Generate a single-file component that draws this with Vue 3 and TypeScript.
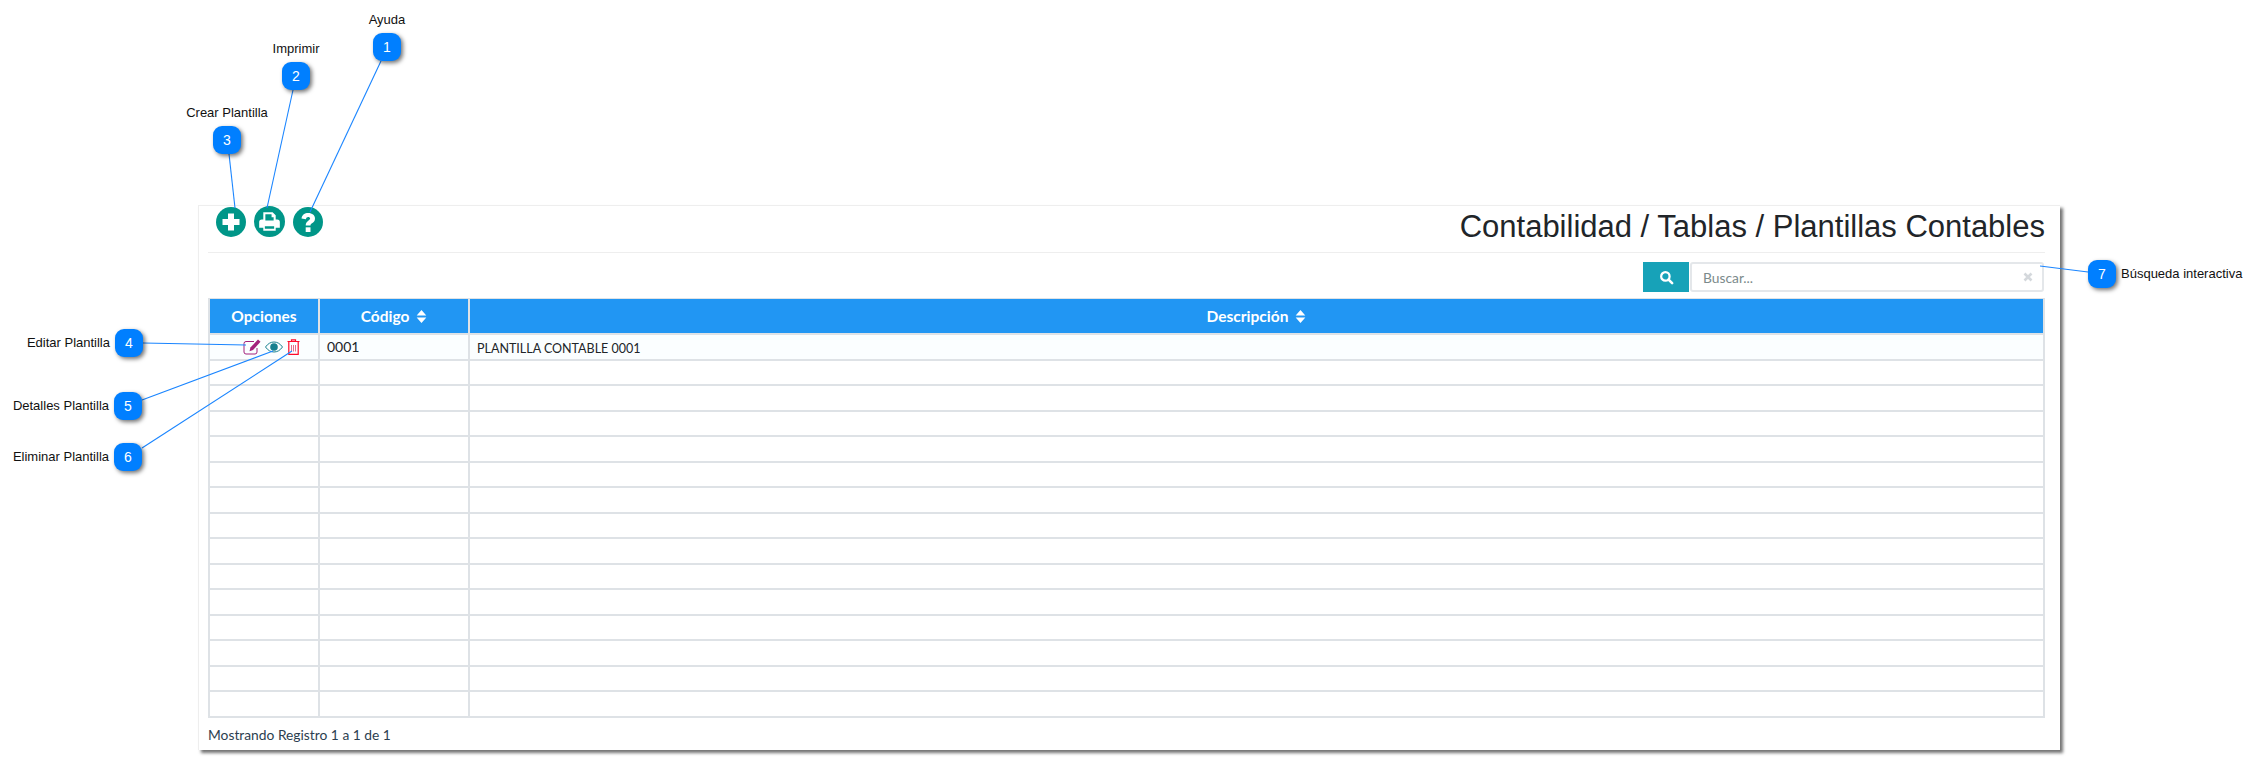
<template>
  <div class="page">
    <section class="card">
      <header class="top-bar">
        <div class="actions">
          <button class="round-btn" type="button" aria-label="Crear Plantilla">
            <svg viewBox="0 0 30 30" width="30" height="30"><path d="M12 6.500h6V12h5.500v6H18v5.500h-6V18H6.500v-6H12z" fill="#fff" /></svg>
          </button>
          <button class="round-btn wide" type="button" aria-label="Imprimir">
            <svg viewBox="0 0 30 30" width="31" height="31">
              <path d="M9 6h9l3 3v4h1.500A2.500 2.500 0 0 1 25 15.500V21h-4v3H9v-3H5v-5.500A2.500 2.500 0 0 1 7.500 13H9z" fill="#fff" />
              <path d="M11 8h6v3h2v3h-8zM10.500 19.500h9V22h-9z" fill="#009688" />
            </svg>
          </button>
          <button class="round-btn" type="button" aria-label="Ayuda">
            <svg viewBox="0 0 30 30" width="30" height="30">
              <path d="M8.500 11.500C9 7.800 11.700 6 15.300 6c3.800 0 6.700 2.300 6.700 5.500 0 2.500-1.400 3.700-3 4.800-1.100.8-1.500 1.200-1.500 2.200h-4.800c0-2.500.9-3.600 2.600-4.800 1.200-.8 1.800-1.300 1.800-2.100 0-.9-.8-1.500-1.900-1.500-1.200 0-2 .7-2.300 2.100z" fill="#fff" />
              <path d="M12.700 20.300h4.800V25h-4.800z" fill="#fff" />
            </svg>
          </button>
        </div>
        <h1 class="title">Contabilidad / Tablas / Plantillas Contables</h1>
      </header>

      <div class="search-row">
        <span class="search-addon">
          <svg viewBox="0 0 16 16" width="15" height="15"><circle cx="6.800" cy="6.800" r="4.500" fill="none" stroke="#fff" stroke-width="2.400" /><path d="M10.200 10.200l3.800 3.800" stroke="#fff" stroke-width="2.800" stroke-linecap="round" /></svg>
        </span>
        <div class="search-box">
          <span class="placeholder">Buscar...</span>
          <svg viewBox="0 0 10 10" width="10" height="10"><path d="M1.500 1.500l7 7M8.500 1.500l-7 7" stroke="#d4d8dc" stroke-width="2.600" /></svg>
        </div>
      </div>

      <div class="grid-table">
        <div class="th">Opciones</div>
        <div class="th">Código <svg class="sort" viewBox="0 0 10 14" width="11" height="15"><path d="M5 1l4.500 5H.5zM5 13L.5 8h9z" fill="#fff" /></svg></div>
        <div class="th">Descripción <svg class="sort" viewBox="0 0 10 14" width="11" height="15"><path d="M5 1l4.500 5H.5zM5 13L.5 8h9z" fill="#fff" /></svg></div>

        <div class="td first options">
          <svg viewBox="0 0 18 16" width="18" height="16">
            <path d="M11 2.500H3A2 2 0 0 0 1 4.500v8.500a2 2 0 0 0 2 2h9a2 2 0 0 0 2-2V9" fill="none" stroke="#a3217c" stroke-width="1" />
            <path d="M15 .5l2.500 2.300L10 11l-3.500 1.200.9-3.600z" fill="#a3217c" />
          </svg>
          <svg viewBox="0 0 18 12" width="18" height="12">
            <path d="M.5 6C3 2.500 5.800 1 9 1s6 1.500 8.500 5C15 9.500 12.200 11 9 11S3 9.500.5 6z" fill="none" stroke="#17808f" stroke-width="1" />
            <circle cx="9" cy="6" r="3.800" fill="#17808f" />
          </svg>
          <svg viewBox="0 0 13 16" width="13" height="16">
            <path d="M4.500 2V.8h4V2M.5 2.500h12" fill="none" stroke="#ff0a2a" stroke-width="1.200" />
            <path d="M1.800 3v12.300h9.400V3" fill="none" stroke="#ff0a2a" stroke-width="1.200" />
            <path d="M4.500 6v6.500M6.500 6v6.500M8.500 6v6.500" fill="none" stroke="#e0476a" stroke-width="0.800" />
          </svg>
        </div>
        <div class="td first code">0001</div>
        <div class="td first desc">PLANTILLA CONTABLE 0001</div>

        <template v-for="n in emptyRows" :key="n">
          <div class="td"></div>
          <div class="td"></div>
          <div class="td"></div>
        </template>
      </div>

      <footer class="table-info">Mostrando Registro 1 a 1 de 1</footer>
    </section>

    <svg class="leaders" width="2257" height="759">
      <line v-for="l in leaders" :key="l.join()" :x1="l[0]" :y1="l[1]" :x2="l[2]" :y2="l[3]" />
    </svg>

    <template v-for="c in callouts" :key="c.n">
      <span class="badge" :style="{ left: c.x + 'px', top: c.y + 'px' }">{{ c.n }}</span>
      <span
        class="label"
        :class="c.align"
        :style="{ left: c.lx + 'px', top: c.ly + 'px' }"
      >{{ c.text }}</span>
    </template>
  </div>
</template>

<script setup lang="ts">
interface Callout {
  n: number
  x: number
  y: number
  text: string
  lx: number
  ly: number
  align: 'center' | 'right' | 'left'
}

const emptyRows = 14

const callouts: Callout[] = [
  { n: 1, x: 373, y: 33, text: 'Ayuda', lx: 387, ly: 13, align: 'center' },
  { n: 2, x: 282, y: 62, text: 'Imprimir', lx: 296, ly: 42, align: 'center' },
  { n: 3, x: 213, y: 126, text: 'Crear Plantilla', lx: 227, ly: 106, align: 'center' },
  { n: 4, x: 115, y: 329, text: 'Editar Plantilla', lx: 110, ly: 336, align: 'right' },
  { n: 5, x: 114, y: 392, text: 'Detalles Plantilla', lx: 109, ly: 399, align: 'right' },
  { n: 6, x: 114, y: 443, text: 'Eliminar Plantilla', lx: 109, ly: 450, align: 'right' },
  { n: 7, x: 2088, y: 260, text: 'Búsqueda interactiva', lx: 2121, ly: 267, align: 'left' },
]

const leaders: number[][] = [
  [381, 61, 310, 212],
  [293, 90, 267, 208],
  [229, 154, 235, 208],
  [143, 343, 246, 345],
  [142, 400, 273, 351],
  [142, 448, 292, 351],
  [2088, 272, 2040, 266],
]
</script>

<style>
html,
body {
  background: #fff;
}
</style>

<style scoped>
.page {
  position: relative;
  width: 2257px;
  height: 759px;
  padding: 205px 0 0 198px;
  box-sizing: border-box;
  overflow: hidden;
  font-family: Lato, "Open Sans", sans-serif;
}
.card {
  width: 1862px;
  height: 545px;
  box-sizing: border-box;
  padding: 0 15px 0 9px;
  background: #fff;
  border-top: 1px solid #eee;
  border-left: 1px solid #eee;
  box-shadow: 3px 3px 3px rgba(0, 0, 0, 0.55);
}
.top-bar {
  display: flex;
  justify-content: space-between;
  height: 47px;
  border-bottom: 1px solid #eee;
  box-sizing: border-box;
}
.actions {
  display: flex;
  gap: 8px;
  padding: 1px 0 0 8px;
}
.round-btn {
  width: 30px;
  height: 30px;
  padding: 0;
  border: 0;
  border-radius: 50%;
  background: #009688;
}
.round-btn.wide {
  width: 31px;
  height: 31px;
  margin-top: -1px;
}
.round-btn svg {
  display: block;
}
.title {
  margin: 0;
  font-family: "Liberation Sans", Arial, sans-serif;
  font-size: 31px;
  font-weight: 400;
  line-height: 34px;
  padding-top: 4px;
  color: #212529;
}
.search-row {
  display: flex;
  justify-content: flex-end;
  height: 30px;
  margin: 9px 1px 6px 0;
}
.search-addon {
  display: flex;
  align-items: center;
  justify-content: center;
  width: 46px;
  margin-right: 1px;
  background: #17a2b8;
}
.search-box {
  display: flex;
  align-items: center;
  justify-content: space-between;
  width: 354px;
  box-sizing: border-box;
  padding: 0 9px 0 11px;
  border: 2px solid #e4e7ea;
  border-radius: 3px;
}
.placeholder {
  font-size: 13.8px;
  color: #7b8a8b;
}
.grid-table {
  display: grid;
  grid-template-columns: 108px 148px 1fr;
  grid-template-rows: 34px;
  grid-auto-rows: 23.5px;
  gap: 2px;
  padding: 1px 2px 2px;
  box-sizing: border-box;
  background: #dee2e6;
}
.th {
  display: flex;
  align-items: center;
  justify-content: center;
  gap: 7px;
  background: #2196f3;
  color: #fff;
  font-size: 15.5px;
  font-weight: 700;
}
.td {
  background: #fff;
}
.td.first {
  background: #fbfeff;
}
.options {
  display: flex;
  align-items: center;
  justify-content: flex-end;
  gap: 4px;
  padding-right: 18px;
}
.code {
  padding: 2px 0 0 7px;
  font-size: 14px;
  line-height: 20px;
  color: #212529;
}
.desc {
  padding: 5px 0 0 7px;
  font-size: 12.5px;
  line-height: 17px;
  color: #212529;
}
.table-info {
  padding-top: 8px;
  font-size: 13.8px;
  line-height: 18px;
  color: #2c3e50;
}
.leaders {
  position: absolute;
  left: 0;
  top: 0;
  pointer-events: none;
}
.leaders line {
  stroke: #1a85ff;
  stroke-width: 1.1;
}
.badge {
  position: absolute;
  display: flex;
  align-items: center;
  justify-content: center;
  width: 28px;
  height: 28px;
  border-radius: 9px;
  background: #007fff;
  box-shadow: 2px 2px 4px rgba(0, 0, 0, 0.55);
  color: #fff;
  font-family: "Liberation Sans", Arial, sans-serif;
  font-size: 14px;
}
.label {
  position: absolute;
  font-family: "Liberation Sans", Arial, sans-serif;
  font-size: 13px;
  line-height: 14px;
  color: #111;
  white-space: nowrap;
}
.label.center {
  transform: translateX(-50%);
}
.label.right {
  transform: translateX(-100%);
}
</style>
